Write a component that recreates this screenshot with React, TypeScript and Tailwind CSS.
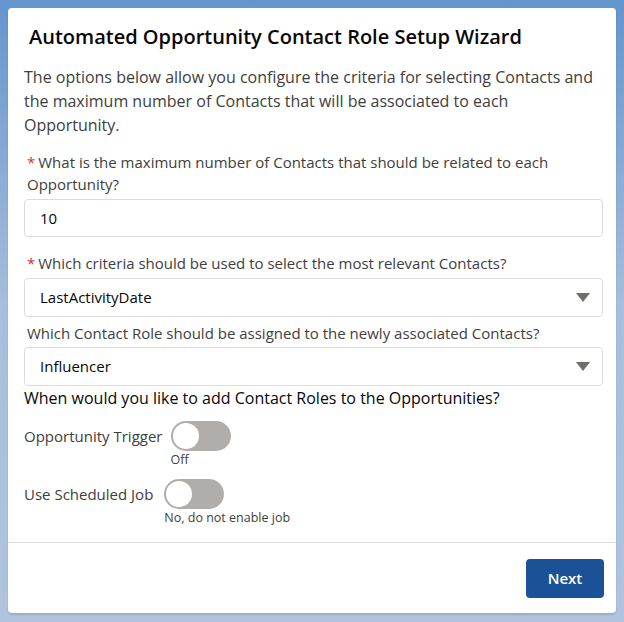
import React from 'react';

const font = { fontFamily: '"Open Sans", "Noto Sans", Arial, sans-serif' };

const Caret = () => (
  <svg width="14" height="9" viewBox="0 0 14 9" className="shrink-0">
    <path d="M0 0 H14 L7 9 Z" fill="#706e6b" />
  </svg>
);

const Toggle = ({ caption }: { caption: string }) => (
  <div className="flex flex-col">
    <div className="w-[60px] h-[30px] rounded-full bg-[#b0adab] p-[2px] flex items-center">
      <div className="w-[26px] h-[26px] rounded-full bg-white" />
    </div>
    <span className="text-[12.5px] leading-[18px] text-[#3e3e3c]">{caption}</span>
  </div>
);

const Label = ({ text, required }: { text: string; required?: boolean }) => (
  <p className="text-[15px] leading-[22px] text-[#3e3e3c] px-[3px]">
    {required && <span className="text-[#c23934] pr-[3px]">*</span>}
    {text}
  </p>
);

const SelectBox = ({ value }: { value: string }) => (
  <div className="h-[39px] border border-[#dddbda] rounded-[4px] flex items-center justify-between pl-[15px] pr-[12px] text-[15px] text-[#080707]">
    <span>{value}</span>
    <Caret />
  </div>
);

export default function App() {
  return (
    <div
      className="w-[624px] h-[622px] bg-gradient-to-b from-[#6495cd] via-[#a8bedc] to-[#b0c4de] pt-[8px] px-[8px]"
      style={font}
    >
      <div className="w-[608px] h-[605px] bg-white rounded-[4px] shadow-[0_2px_2px_rgba(0,0,0,0.12)] flex flex-col">
        <div className="pl-[16px] pr-[13px] pt-[14px] flex-1">
          <h1 className="text-[20px] leading-[30px] font-semibold text-[#080707] pl-[5px]">
            Automated Opportunity Contact Role Setup Wizard
          </h1>
          <p className="mt-[13px] pr-[3px] text-[16px] leading-[24px] text-[#3e3e3c]">
            The options below allow you configure the criteria for selecting Contacts and the maximum
            number of Contacts that will be associated to each Opportunity.
          </p>

          <div className="mt-[14px]">
            <Label required text="What is the maximum number of Contacts that should be related to each Opportunity?" />
            <div className="mt-[4px] h-[38px] border border-[#dddbda] rounded-[4px] flex items-center pl-[15px] text-[15px] text-[#080707]">
              10
            </div>
          </div>

          <div className="mt-[15px]">
            <Label required text="Which criteria should be used to select the most relevant Contacts?" />
            <div className="mt-[4px]">
              <SelectBox value="LastActivityDate" />
            </div>
          </div>

          <div className="mt-[5px]">
            <Label text="Which Contact Role should be assigned to the newly associated Contacts?" />
            <div className="mt-[3px]">
              <SelectBox value="Influencer" />
            </div>
          </div>

          <p className="text-[16px] leading-[24px] text-[#080707]">
            When would you like to add Contact Roles to the Opportunities?
          </p>

          <div className="mt-[11px] flex items-start gap-[8px]">
            <span className="text-[15px] leading-[30px] text-[#3e3e3c]">Opportunity Trigger</span>
            <Toggle caption="Off" />
          </div>

          <div className="mt-[10px] flex items-start gap-[11px]">
            <span className="text-[15px] leading-[30px] text-[#3e3e3c]">Use Scheduled Job</span>
            <Toggle caption="No, do not enable job" />
          </div>
        </div>

        <div className="border-t border-[#dddbda] h-[71px] flex items-center justify-end px-[12px]">
          <button className="w-[78px] h-[39px] rounded-[4px] bg-[#1b5297] text-white text-[15px] font-semibold">
            Next
          </button>
        </div>
      </div>
    </div>
  );
}
